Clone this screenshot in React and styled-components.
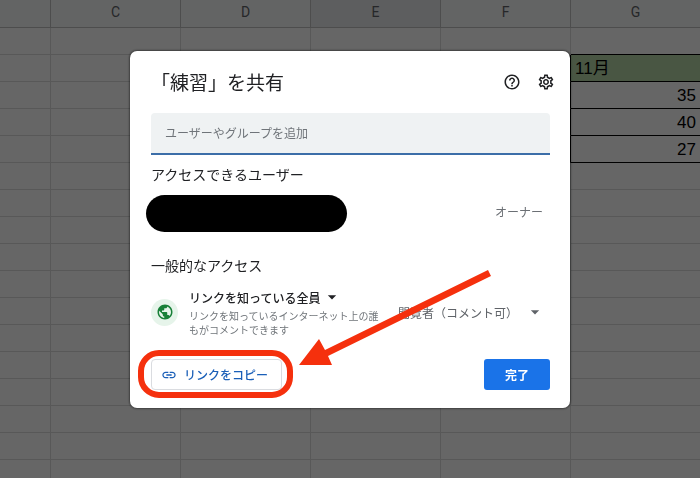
import React from "react";
import styled, { createGlobalStyle } from "styled-components";
import {
  MdHelpOutline,
  MdOutlineSettings,
  MdPublic,
  MdLink,
  MdArrowDropDown,
} from "react-icons/md";

const GlobalStyle = createGlobalStyle`
  *, *::before, *::after { box-sizing: border-box; }
  body {
    margin: 0;
    overflow: hidden;
    background: #fff;
    color: #202124;
    font-family: "Liberation Sans", "Noto Sans CJK JP", sans-serif;
  }
  button, input, select { font: inherit; }
`;

const Page = styled.div`
  height: 100vh;
  overflow: hidden;
`;

const Sheet = styled.table`
  width: 701px;
  table-layout: fixed;
  border-collapse: separate;
  border-spacing: 0;
`;

const ColumnHead = styled.th`
  width: ${(p) => (p.$partial ? "51px" : "130px")};
  height: 28px;
  padding: 0 0 4px;
  border-right: 1px solid #c0c0c0;
  border-bottom: 1px solid #c0c0c0;
  background: ${(p) => (p.$selected ? "#e8eaed" : "#f8f9fa")};
  color: #5f6368;
  font: 400 14px/20px Roboto, sans-serif;
`;

const Cell = styled.td`
  height: 27px;
  padding: 2px 4px 0;
  border-right: ${(p) => (p.$edge ? "2px solid #000" : "1px solid #dcdddd")};
  border-bottom: 1px solid ${(p) => (p.$boxed ? "#000" : "#dcdddd")};
  background: ${(p) => (p.$title ? "#b6d7a8" : "#fff")};
  color: #000;
  font-size: 17px;
  line-height: 24px;
  text-align: ${(p) => (p.$title ? "left" : "right")};
`;

const Scrim = styled.div`
  position: fixed;
  inset: 0;
  display: flex;
  align-items: flex-start;
  justify-content: center;
  padding: 51px 16px 16px;
  background: rgba(0, 0, 0, 0.6);
`;

const Dialog = styled.section`
  position: relative;
  width: 100%;
  max-width: 440px;
  padding: 19px 20px 18px 21px;
  border-radius: 7px;
  background: #fff;
  box-shadow: 0 0 2px 1px rgba(0, 0, 0, 0.4);
  font-family: "Noto Sans CJK JP", sans-serif;
`;

const Header = styled.header`
  display: flex;
  align-items: center;
  height: 24px;
`;

const Title = styled.h1`
  flex: 1;
  margin: 0;
  color: #202124;
  font-size: 19px;
  font-weight: 400;
  line-height: 24px;
`;

const HeaderActions = styled.div`
  display: flex;
  gap: 16px;
  margin-right: -5px;
`;

const IconButton = styled.button`
  display: flex;
  padding: 0;
  border: 0;
  background: none;
  color: #202124;
  font-size: 18px;
`;

const PeopleInput = styled.input`
  display: block;
  width: 100%;
  height: 42px;
  margin-top: 19px;
  padding: 0 14px 2px;
  border: 0;
  border-bottom: 2px solid #3c6ea8;
  border-radius: 4px 4px 0 0;
  outline: 0;
  background: #eff2f3;
  color: #202124;
  font-size: 12px;
  &::placeholder { color: #6f7479; opacity: 1; }
`;

const SectionTitle = styled.h2`
  margin: 9px 0 0;
  color: #202124;
  font-size: 14px;
  font-weight: 400;
  line-height: 20px;
`;

const OwnerRow = styled.div`
  display: flex;
  align-items: center;
  justify-content: space-between;
  margin: 11px 7px 0 -5px;
`;

const HiddenName = styled.div`
  width: 201px;
  height: 37px;
  border-radius: 19px;
  background: #000;
`;

const RoleText = styled.span`
  padding-bottom: 4px;
  color: #6b6f74;
  font-size: 12px;
  line-height: 16px;
`;

const GeneralSection = styled.div`
  padding-top: 14px;
`;

const AccessRow = styled.div`
  display: flex;
  align-items: center;
  margin: 12px 5px 0 0;
`;

const GlobeBadge = styled.span`
  display: flex;
  flex: none;
  align-items: center;
  justify-content: center;
  width: 27px;
  height: 27px;
  margin-right: 11px;
  border-radius: 50%;
  background: #e6f4ea;
  color: #188038;
  font-size: 18px;
`;

const AccessText = styled.div`
  flex: 1;
  min-width: 0;
`;

const SelectBox = styled.span`
  display: flex;
  flex: none;
  align-items: center;
  gap: ${(p) => (p.$wide ? "6px" : "0")};
  color: ${(p) => (p.$wide ? "#5f6368" : "#202124")};
  svg { flex: none; font-size: 20px; }
`;

const Select = styled.select`
  height: 20px;
  padding: 0;
  border: 0;
  outline: 0;
  appearance: none;
  background: none;
  color: inherit;
  font-size: 12px;
  font-weight: ${(p) => (p.$strong ? 500 : 400)};
`;

const Description = styled.p`
  margin: 2px 0 0;
  color: #70757a;
  font-size: 10px;
  line-height: 14px;
`;

const Footer = styled.footer`
  display: flex;
  align-items: center;
  justify-content: space-between;
  margin-top: 22px;
`;

const CopyButton = styled.button`
  display: flex;
  align-items: center;
  gap: 7px;
  height: 31px;
  padding: 0 13px 0 9px;
  border: 1px solid #dadce0;
  border-radius: 4px;
  background: #fff;
  color: #1a5fb8;
  font-size: 12px;
  font-weight: 500;
  svg { font-size: 16px; }
`;

const DoneButton = styled.button`
  width: 66px;
  height: 31px;
  padding: 0;
  border: 0;
  border-radius: 3px;
  background: #1a73e8;
  color: #fff;
  font-size: 12px;
  font-weight: 700;
`;

const Markup = styled.svg`
  position: absolute;
  top: 0;
  left: 0;
  pointer-events: none;
`;

const columns = ["", "C", "D", "E", "F", "G"];
const values = { 1: "11月", 2: "35", 3: "40", 4: "27" };
const rows = Array.from({ length: 17 }, (_, i) => i);

function Spreadsheet() {
  return (
    <Sheet>
      <thead>
        <tr>
          {columns.map((c) => (
            <ColumnHead key={c} $partial={c === ""} $selected={c === "E"}>
              {c}
            </ColumnHead>
          ))}
        </tr>
      </thead>
      <tbody>
        {rows.map((r) => (
          <tr key={r}>
            {columns.map((c) => (
              <Cell
                key={c}
                $edge={c === "F" && r in values}
                $boxed={c === "G" && r < 5}
                $title={c === "G" && r === 1}
              >
                {c === "G" ? values[r] : null}
              </Cell>
            ))}
          </tr>
        ))}
      </tbody>
    </Sheet>
  );
}

function ShareDialog() {
  return (
    <Dialog role="dialog" aria-labelledby="share-title">
      <Header>
        <Title id="share-title">「練習」を共有</Title>
        <HeaderActions>
          <IconButton aria-label="ヘルプ"><MdHelpOutline /></IconButton>
          <IconButton aria-label="設定"><MdOutlineSettings /></IconButton>
        </HeaderActions>
      </Header>
      <PeopleInput
        type="text"
        aria-label="ユーザーやグループを追加"
        placeholder="ユーザーやグループを追加"
      />
      <SectionTitle>アクセスできるユーザー</SectionTitle>
      <OwnerRow>
        <HiddenName />
        <RoleText>オーナー</RoleText>
      </OwnerRow>
      <GeneralSection>
        <SectionTitle>一般的なアクセス</SectionTitle>
        <AccessRow>
          <GlobeBadge><MdPublic /></GlobeBadge>
          <AccessText>
            <SelectBox>
              <Select $strong aria-label="一般的なアクセス">
                <option>リンクを知っている全員</option>
              </Select>
              <MdArrowDropDown />
            </SelectBox>
            <Description>
              リンクを知っているインターネット上の誰
              <br />
              もがコメントできます
            </Description>
          </AccessText>
          <SelectBox $wide>
            <Select aria-label="権限">
              <option>閲覧者（コメント可）</option>
            </Select>
            <MdArrowDropDown />
          </SelectBox>
        </AccessRow>
      </GeneralSection>
      <Footer>
        <CopyButton><MdLink />リンクをコピー</CopyButton>
        <DoneButton>完了</DoneButton>
      </Footer>
      <Markup width="440" height="357" viewBox="0 0 440 357" aria-hidden="true">
        <rect x="11" y="302" width="149" height="42" rx="18" fill="none" stroke="#f5300d" strokeWidth="6" />
        <path d="M358 219 L361 225 L198 305 L202 314 L169 314 L189 288 L195 299 Z" fill="#f5300d" />
      </Markup>
    </Dialog>
  );
}

export default function App() {
  return (
    <Page>
      <GlobalStyle />
      <Spreadsheet />
      <Scrim>
        <ShareDialog />
      </Scrim>
    </Page>
  );
}
